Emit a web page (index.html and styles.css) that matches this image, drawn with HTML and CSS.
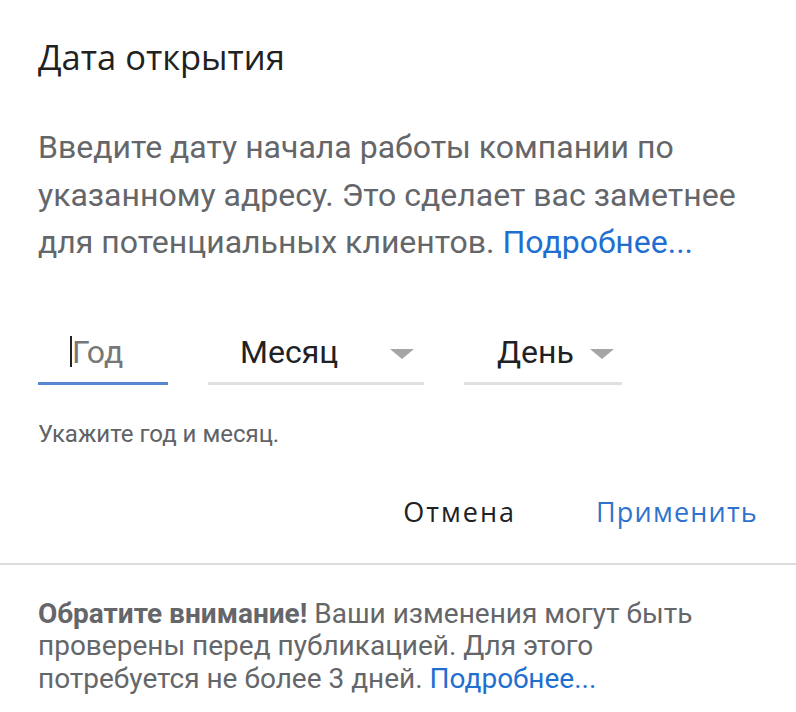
FILE: index.html
```html
<!DOCTYPE html>
<html lang="ru">
<head>
<meta charset="utf-8">
<link rel="stylesheet" href="styles.css">
</head>
<body>
<div class="dialog">
  <div class="main">
    <h1 class="title">Дата открытия</h1>
    <p class="desc">Введите дату начала работы компании по указанному адресу. Это сделает вас заметнее для потенциальных клиентов. <a class="link" href="#">Подробнее...</a></p>
    <div class="fields">
      <div class="field field-year active">
        <span class="caret"></span><span class="placeholder">Год</span>
      </div>
      <div class="field field-month">
        <span class="value">Месяц</span><span class="arrow"></span>
      </div>
      <div class="field field-day">
        <span class="value">День</span><span class="arrow"></span>
      </div>
    </div>
    <div class="hint">Укажите год и месяц.</div>
    <div class="actions">
      <button class="btn btn-cancel">Отмена</button>
      <button class="btn btn-apply">Применить</button>
    </div>
  </div>
  <div class="footer">
    <p class="note"><b>Обратите внимание!</b> Ваши изменения могут быть проверены перед публикацией. Для этого потребуется не более 3 дней. <a class="link" href="#">Подробнее...</a></p>
  </div>
</div>
</body>
</html>
```

FILE: styles.css
```css
html, body {
  margin: 0;
  padding: 0;
  background: #ffffff;
}
body {
  font-family: Roboto, "Noto Sans", Arial, sans-serif;
}
.dialog {
  width: 796px;
}
.main {
  padding: 36px 38px 33px 38px;
  border-bottom: 2px solid #dcdcdc;
}
.title {
  margin: 0;
  font-family: "Open Sans", Roboto, sans-serif;
  font-weight: 400;
  font-size: 34.5px;
  line-height: 42px;
  color: #212121;
}
.desc {
  margin: 46px 0 0 0;
  max-width: 722px;
  font-size: 32px;
  line-height: 47.5px;
  color: #646669;
}
.link {
  color: #1f6fd1;
  text-decoration: none;
}
.fields {
  display: flex;
  gap: 40px;
  margin-top: 62px;
}
.field {
  height: 56px;
  box-sizing: border-box;
  border-bottom: 3px solid #e0e0e0;
  display: flex;
  align-items: center;
  padding-bottom: 7px;
  font-size: 32px;
  color: #202124;
}
.field-year {
  width: 130px;
  padding-left: 32px;
  border-bottom-color: #5a87d1;
}
.field-month {
  width: 216px;
  padding-left: 32px;
}
.field-day {
  width: 158px;
  padding-left: 33px;
}
.caret {
  width: 2px;
  height: 31px;
  background: #202124;
}
.placeholder {
  color: #777777;
}
.arrow {
  width: 0;
  height: 0;
  border-left: 12px solid transparent;
  border-right: 12px solid transparent;
  border-top: 10px solid #a5a5a5;
  margin-left: auto;
  margin-right: 10px;
  margin-top: 4px;
}
.field-day .arrow {
  margin-left: 16px;
  margin-right: 0;
}
.hint {
  margin-top: 37px;
  font-size: 24px;
  line-height: 24px;
  color: #5f6368;
}
.actions {
  display: flex;
  justify-content: flex-end;
  gap: 80px;
  margin-top: 48px;
  padding-right: 0;
}
.btn {
  background: none;
  border: none;
  padding: 0;
  font-family: "Open Sans", Roboto, sans-serif;
  font-size: 27px;
  line-height: 36px;
  letter-spacing: 2px;
  font-weight: 500;
  cursor: pointer;
}
.btn-cancel {
  color: #202124;
}
.btn-apply {
  color: #2f73cc;
  letter-spacing: 1.2px;
}
.footer {
  padding: 33px 38px 20px 38px;
}
.note {
  margin: 0;
  max-width: 680px;
  font-size: 28px;
  line-height: 32.5px;
  color: #646669;
}
.note b {
  font-weight: 700;
}
```
